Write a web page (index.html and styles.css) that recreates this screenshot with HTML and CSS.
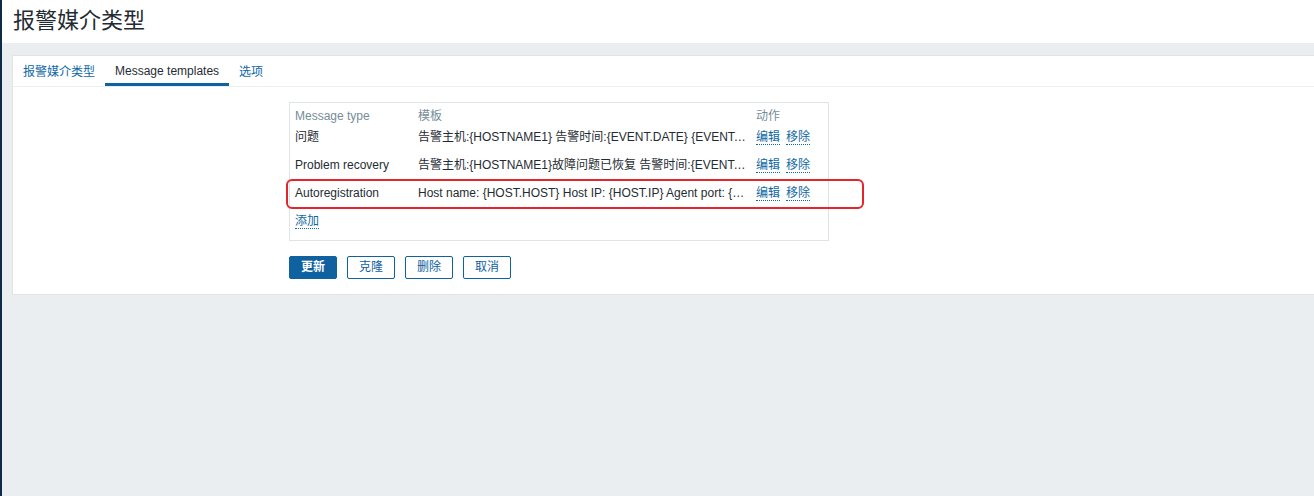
FILE: index.html
```html
<!DOCTYPE html>
<html lang="zh">
<head>
<meta charset="utf-8">
<title>报警媒介类型</title>
<link rel="stylesheet" href="styles.css">
</head>
<body>
<div class="sidebar"></div>
<div class="main">
  <header class="header">
    <h1 class="title">报警媒介类型</h1>
  </header>
  <div class="content">
    <div class="card">
      <ul class="tabs">
        <li class="tab"><a class="tab-link" href="#">报警媒介类型</a></li>
        <li class="tab tab-active"><span class="tab-link">Message templates</span></li>
        <li class="tab"><a class="tab-link" href="#">选项</a></li>
      </ul>
      <div class="form">
        <div class="list-box">
          <table class="list">
            <colgroup>
              <col class="c-type"><col class="c-tpl"><col class="c-act">
            </colgroup>
            <thead>
              <tr class="head-row"><th>Message type</th><th>模板</th><th>动作</th></tr>
            </thead>
            <tbody>
              <tr class="row"><td>问题</td><td class="tpl"><span class="tpl-text">告警主机:{HOSTNAME1} 告警时间:{EVENT.DATE} {EVENT.TIME} 告警等级:{TRIGGER.SEVERITY}</span></td><td><a class="link" href="#">编辑</a><a class="link" href="#">移除</a></td></tr>
              <tr class="row"><td>Problem recovery</td><td class="tpl"><span class="tpl-text">告警主机:{HOSTNAME1}故障问题已恢复 告警时间:{EVENT.DATE} {EVENT.TIME}</span></td><td><a class="link" href="#">编辑</a><a class="link" href="#">移除</a></td></tr>
              <tr class="row"><td>Autoregistration</td><td class="tpl"><span class="tpl-text">Host name: {HOST.HOST} Host IP: {HOST.IP} Agent port: {HOST.PORT}</span></td><td><a class="link" href="#">编辑</a><a class="link" href="#">移除</a></td></tr>
              <tr class="row"><td colspan="3"><a class="link" href="#">添加</a></td></tr>
            </tbody>
          </table>
          <div class="highlight"></div>
        </div>
        <div class="buttons">
          <button class="btn btn-primary">更新</button>
          <button class="btn">克隆</button>
          <button class="btn">删除</button>
          <button class="btn">取消</button>
        </div>
      </div>
    </div>
  </div>
</div>
</body>
</html>
```

FILE: styles.css
```css
html, body {
  margin: 0;
  padding: 0;
  height: 100%;
}
body {
  display: flex;
  background: #ebeef0;
  font-family: "Liberation Sans", Arial, "Noto Sans CJK SC", sans-serif;
  font-size: 12px;
  color: #1f2c33;
}
.sidebar {
  width: 2px;
  flex: none;
  background: #0e2c47;
}
.main {
  flex: 1;
  min-width: 0;
}
.header {
  height: 43px;
  background: #ffffff;
  box-sizing: border-box;
  padding-left: 11px;
  display: flex;
  align-items: center;
}
.title {
  margin: 0;
  font-size: 22px;
  font-weight: normal;
  color: #1f2c33;
  line-height: 26px;
  padding-bottom: 2px;
}
.content {
  padding: 12px 0 0 10px;
}
.card {
  background: #ffffff;
  border: 1px solid #dfe4e7;
  border-right: none;
  height: 240px;
  box-sizing: border-box;
}
.tabs {
  list-style: none;
  margin: 0;
  padding: 0;
  display: flex;
  height: 30px;
  border-bottom: 1px solid #ebeef0;
}
.tab {
  height: 30px;
  box-sizing: border-box;
  padding: 0 10px;
  display: flex;
  align-items: center;
  padding-bottom: 1px;
}
.tab-link {
  color: #0f68a6;
  text-decoration: none;
}
.tab-active {
  border-bottom: 3px solid #0f61a0;
  padding-bottom: 0;
  padding-top: 2px;
}
.tab-active .tab-link {
  color: #1f2c33;
}
.form {
  padding: 15px 0 0 276px;
}
.list-box {
  position: relative;
  width: 540px;
  box-sizing: border-box;
  border: 1px solid #dfe4e7;
  padding: 6px 0 5px 5px;
}
.list {
  border-collapse: collapse;
  table-layout: fixed;
  width: 100%;
}
.c-type { width: 123px; }
.c-tpl { width: 338px; }
.list th {
  font-weight: normal;
  text-align: left;
  color: #768d99;
  height: 14px;
  padding: 0;
  line-height: 14px;
}
.list td {
  height: 28px;
  padding: 0;
  white-space: nowrap;
  line-height: 14px;
}
.tpl {
  padding-right: 8px !important;
}
.tpl-text {
  display: block;
  overflow: hidden;
  text-overflow: ellipsis;
  white-space: nowrap;
}
.link {
  color: #0f68a6;
  text-decoration: none;
  border-bottom: 1px dotted #0f68a6;
  margin-right: 6px;
}
.highlight {
  position: absolute;
  left: -4px;
  top: 76px;
  width: 574px;
  height: 26px;
  border: 2px solid #e2262c;
  border-radius: 6px;
  pointer-events: none;
}
.buttons {
  display: flex;
  gap: 10px;
  margin-top: 15px;
}
.btn {
  width: 48px;
  height: 23px;
  box-sizing: border-box;
  border: 1px solid #0f61a0;
  border-radius: 2px;
  background: #ffffff;
  color: #0f61a0;
  font-family: "Liberation Sans", Arial, "Noto Sans CJK SC", sans-serif;
  font-size: 12px;
  padding: 0;
  line-height: 21px;
}
.btn-primary {
  background: #0f61a0;
  color: #ffffff;
  font-weight: bold;
}
```
